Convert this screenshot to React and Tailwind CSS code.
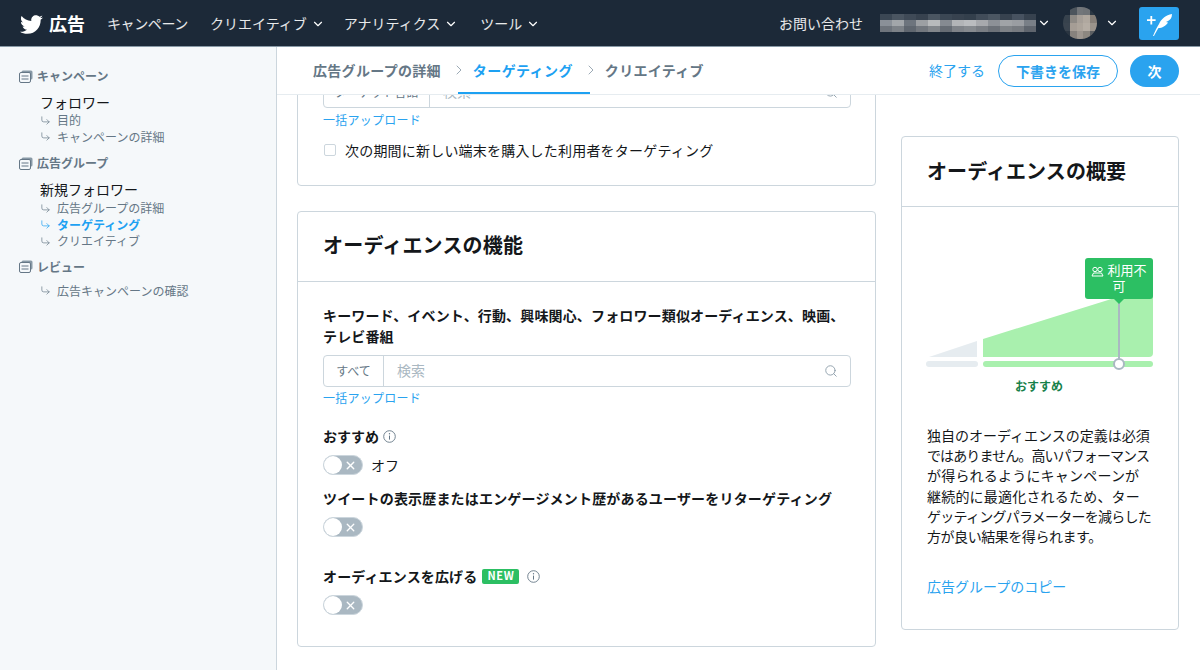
import { FaTwitter } from 'react-icons/fa';
import { ChevronDown, ChevronRight, CornerDownRight, Search, X } from 'lucide-react';

const nameBlocks = [
  ['#3b4754', '#4a5561', '#3f4a57', '#37424f', '#4a5561', '#3b4754', '#37424f', '#333f4c', '#414c59', '#4b5662', '#37424f', '#475260', '#37424f'],
  ['#8a9098', '#a2a6aa', '#6d747d', '#9c9fa3', '#b8babc', '#858a91', '#b2b4b7', '#babcbf', '#a7a9ad', '#8d9197', '#a0a3a7', '#9a9da2', '#797f87'],
  ['#6e747c', '#7d8288', '#5f666f', '#72777e', '#82868b', '#666c74', '#7f8389', '#868a8f', '#7a7e84', '#6c7178', '#7e8287', '#777b81', '#5f656e'],
];

const avatarBlocks = [
  ['#1c2938', '#4d555d', '#72767a', '#6f7377', '#2c3844'],
  ['#37424d', '#8e8a85', '#a69f98', '#b0a89f', '#867f78'],
  ['#3a444f', '#a59d95', '#aca49b', '#b5ada4', '#9a938b'],
  ['#2a3541', '#87827d', '#9d968f', '#8c8780', '#5c5f62'],
];

function Sub({ active, children }) {
  return (
    <div className={`flex items-center h-[16.5px] text-xs ${active ? 'text-[#1da1f2] font-bold' : 'text-[#657786]'}`}>
      <CornerDownRight className="w-[11px] h-[11px] mr-[6px] shrink-0" strokeWidth={1.5} />
      {children}
    </div>
  );
}

function SectionTitle({ children, className = '' }) {
  return (
    <div className={`flex items-center text-xs font-bold text-[#657786] h-4 ${className}`}>
      <svg width="14" height="13" viewBox="0 0 14 13" className="mr-[4px] shrink-0">
        <rect x="2.5" y="0.5" width="11" height="9" rx="1.5" fill="#8899a6" />
        <rect x="0.5" y="2.5" width="11" height="10" rx="1.5" fill="#f5f8fa" stroke="#657786" />
        <path d="M2.5 6h7M2.5 9h7" stroke="#657786" />
      </svg>
      {children}
    </div>
  );
}

function NavItem({ children, arrow = true, className = '' }) {
  return (
    <div className={`flex items-center text-white/90 text-sm ${className}`}>
      {children}
      {arrow && <ChevronDown className="w-[14px] h-[14px] ml-[4px] mt-[2px] text-white" strokeWidth={2} />}
    </div>
  );
}

function Toggle() {
  return (
    <div className="w-10 h-5 rounded-full bg-[#aab8c2] border border-[#ccd6dd] flex items-center justify-between shrink-0">
      <div className="w-[18px] h-[18px] rounded-full bg-white" />
      <X className="w-[13px] h-[13px] text-white mr-[5px]" strokeWidth={2.5} />
    </div>
  );
}

function Info() {
  return (
    <svg width="13" height="13" viewBox="0 0 13 13" className="shrink-0">
      <circle cx="6.5" cy="6.5" r="5.8" fill="none" stroke="#657786" strokeWidth="0.9" />
      <path d="M6.5 5.6v4" stroke="#657786" strokeWidth="1" />
      <circle cx="6.5" cy="3.8" r="0.7" fill="#657786" />
    </svg>
  );
}

function SearchBox({ prefix, prefixWidth = 'w-[60px]' }) {
  return (
    <div className="flex h-8 border border-[#ccd6dd] rounded-[4px] bg-white">
      <div className={`${prefixWidth} shrink-0 whitespace-nowrap border-r border-[#ccd6dd] flex items-center justify-center text-xs text-[#657786] pb-[1px]`}>{prefix}</div>
      <div className="flex-1 flex items-center justify-between pl-[13px] pr-[12px] text-sm text-[#aab8c2]">
        <span className="mb-[2px]">検索</span>
        <Search className="w-[14px] h-[14px] text-[#8899a6]" strokeWidth={1.5} />
      </div>
    </div>
  );
}

function Card({ className = '', children }) {
  return <div className={`bg-white border border-[#ccd6dd] rounded-[4px] ${className}`}>{children}</div>;
}

export default function App() {
  return (
    <div className="w-[1200px] h-[670px] overflow-hidden flex flex-col bg-white text-[#14171a] font-['Noto_Sans_CJK_JP','Liberation_Sans',sans-serif]">
      {/* top bar */}
      <header className="h-[47px] shrink-0 bg-[#1c2938] border-b border-[#8899a6] flex items-center pl-[20px] pr-[21px]">
        <FaTwitter className="text-white w-[23px] h-[23px] mt-[2px]" />
        <span className="text-white font-bold text-lg ml-[6px] mr-[22px] leading-none">広告</span>
        <div className="flex items-center gap-[19px]">
          <NavItem arrow={false} className="tracking-[-0.4px] mr-[3px]">キャンペーン</NavItem>
          <NavItem>クリエイティブ</NavItem>
          <NavItem className="mr-[3px]">アナリティクス</NavItem>
          <NavItem>ツール</NavItem>
        </div>
        <div className="ml-auto flex items-center">
          <span className="text-white/90 text-sm mr-[17px]">お問い合わせ</span>
          <div className="flex flex-col">
            {nameBlocks.map((row, i) => (
              <div key={i} className="flex">
                {row.map((c, j) => (
                  <div key={j} className="w-[12px] h-[6px]" style={{ background: c }} />
                ))}
              </div>
            ))}
          </div>
          <ChevronDown className="w-[14px] h-[14px] text-white ml-[1px]" strokeWidth={2} />
          <div className="ml-[12px] w-[34px] h-[32px] rounded-full overflow-hidden flex flex-col">
            {avatarBlocks.map((row, i) => (
              <div key={i} className="flex flex-1">
                {row.map((c, j) => (
                  <div key={j} className="flex-1" style={{ background: c }} />
                ))}
              </div>
            ))}
          </div>
          <ChevronDown className="w-[14px] h-[14px] text-white ml-[8px]" strokeWidth={2} />
          <div className="ml-[20px] w-[40px] h-[33px] bg-[#2aa3ef] rounded-[3px]">
            <svg width="40" height="33" viewBox="0 0 40 33" className="block">
              <path d="M12.3 9v8.4M8 13.2h8.6" stroke="#fff" strokeWidth="1.8" />
              <path d="M14 29C16 24 18 20 20 17C22 12 27 8 33 7C33 11 31 13 29 14L27 15L29 15.5C27 19 23 21 19.5 21C17.5 24 16 27 15 29Z" fill="#fff" />
            </svg>
          </div>
        </div>
      </header>

      <div className="flex flex-1 min-h-0">
        {/* sidebar */}
        <aside className="w-[277px] shrink-0 bg-[#f5f8fa] border-r border-[#ccd6dd] pl-[19px] pt-[21px]">
          <SectionTitle>キャンペーン</SectionTitle>
          <div className="pl-[21px] mt-[9px]">
            <div className="text-sm leading-[19px]">フォロワー</div>
            <Sub>目的</Sub>
            <Sub>キャンペーンの詳細</Sub>
          </div>
          <SectionTitle className="mt-[10px]">広告グループ</SectionTitle>
          <div className="pl-[21px] mt-[8px]">
            <div className="text-sm leading-[21px]">新規フォロワー</div>
            <Sub>広告グループの詳細</Sub>
            <Sub active>ターゲティング</Sub>
            <Sub>クリエイティブ</Sub>
          </div>
          <SectionTitle className="mt-[9px]">レビュー</SectionTitle>
          <div className="pl-[21px] mt-[8px]">
            <Sub>広告キャンペーンの確認</Sub>
          </div>
        </aside>

        <main className="flex-1 min-w-0 flex flex-col">
          {/* step tabs */}
          <div className="h-[48px] shrink-0 bg-white border-b border-[#e6ecf0] flex items-center pl-[36px] pr-[21px] relative z-10">
            <span className="text-sm leading-5 mb-[2px] font-bold text-[#657786] tracking-[0.3px]">広告グループの詳細</span>
            <ChevronRight className="w-[16px] h-[16px] text-[#8899a6] ml-[10px] mr-[6px] mb-[2px]" strokeWidth={1.25} />
            <span className="relative text-sm leading-5 mb-[2px] font-bold text-[#1da1f2] tracking-[0.4px]">
              ターゲティング
              <span className="absolute left-[-15px] right-[-17px] top-[32px] h-[2px] bg-[#1da1f2]" />
            </span>
            <ChevronRight className="w-[16px] h-[16px] text-[#8899a6] ml-[10px] mr-[6px] mb-[2px]" strokeWidth={1.25} />
            <span className="text-sm leading-5 mb-[2px] font-bold text-[#657786] tracking-[0.3px]">クリエイティブ</span>
            <span className="ml-auto text-sm text-[#2aa3ef] mb-[2px]">終了する</span>
            <button className="ml-[13px] w-[120px] h-8 rounded-full border border-[#2aa3ef] text-sm font-bold text-[#2aa3ef]">下書きを保存</button>
            <button className="ml-[12px] w-[49px] h-8 rounded-full bg-[#2aa3ef] text-sm font-bold text-white">次</button>
          </div>

          {/* scrolled content */}
          <div className="flex-1 min-h-0 overflow-hidden flex pl-[20px] pr-[21px] gap-[25px]">
            <div className="w-[579px] shrink-0">
              <Card className="-mt-[20px] pt-0 pb-[25px] pl-[25px] pr-[24px]">
                <SearchBox prefix="ターゲット言語" prefixWidth="w-[106px]" />
                <div className="text-xs text-[#2aa3ef] tracking-[0.25px] mt-[4px] leading-[16px]">一括アップロード</div>
                <div className="flex items-center mt-[12px] h-5">
                  <div className="w-[12px] h-[12px] ml-[1px] border border-[#ccd6dd] rounded-[2px]" />
                  <span className="ml-[9px] text-sm tracking-[0.2px]">次の期間に新しい端末を購入した利用者をターゲティング</span>
                </div>
              </Card>
              <Card className="mt-[25px] h-[436px]">
                <div className="h-[70px] border-b border-[#ccd6dd] flex items-center pl-[25px] pb-[3px] text-xl font-bold tracking-[0.2px]">オーディエンスの機能</div>
                <div className="pl-[25px] pr-[24px] pt-[23px]">
                  <div className="text-sm font-bold leading-[21px] tracking-[0.15px] whitespace-nowrap">
                    キーワード、イベント、行動、興味関心、フォロワー類似オーディエンス、映画、<br />テレビ番組
                  </div>
                  <div className="mt-[8px]"><SearchBox prefix="すべて" /></div>
                  <div className="text-xs text-[#2aa3ef] tracking-[0.25px] mt-[3px] leading-[16px]">一括アップロード</div>
                  <div className="flex items-center gap-[4px] mt-[20px] h-5 text-sm font-bold">おすすめ <Info /></div>
                  <div className="flex items-center mt-[9px]">
                    <Toggle />
                    <span className="ml-[8px] text-sm">オフ</span>
                  </div>
                  <div className="mt-[13px] h-5 flex items-center text-sm font-bold tracking-[0.18px] whitespace-nowrap">ツイートの表示歴またはエンゲージメント歴があるユーザーをリターゲティング</div>
                  <div className="mt-[9px]"><Toggle /></div>
                  <div className="flex items-center mt-[29px] h-5 text-sm font-bold tracking-[0.15px]">
                    オーディエンスを広げる
                    <span className="ml-[5px] w-[37px] h-[15px] rounded-[2px] bg-[#2cbf63] text-white text-[11px] font-bold tracking-[0.6px] flex items-center justify-center">NEW</span>
                    <span className="ml-[8px]"><Info /></span>
                  </div>
                  <div className="mt-[9px]"><Toggle /></div>
                </div>
              </Card>
            </div>

            {/* audience summary */}
            <div className="w-[278px] shrink-0 pt-[41px]">
              <Card className="h-[494px]">
                <div className="h-[70px] border-b border-[#ccd6dd] flex items-center px-[25px] pb-[2px] text-xl font-bold tracking-[0.1px]">オーディエンスの概要</div>
                <div className="relative h-[208px]">
                  <svg width="276" height="190" viewBox="0 0 276 190" className="block">
                    <path d="M27 150 L75 134 V150 Z" fill="#e6ecf0" />
                    <path d="M81 132 L251 79 V146 a4 4 0 0 1 -4 4 H81 Z" fill="#a9f0ae" />
                    <rect x="24" y="154" width="52" height="6" rx="3" fill="#e6ecf0" />
                    <rect x="81" y="154" width="170" height="6" rx="3" fill="#a9f0ae" />
                    <path d="M217 90 V157" stroke="#aab8c2" strokeWidth="2" />
                    <circle cx="217" cy="157" r="5" fill="#fff" stroke="#aab8c2" strokeWidth="2" />
                  </svg>
                  <div className="absolute left-[183px] top-[51px] w-[68px] h-[41px] rounded-[3px] bg-[#2cbf63] text-white text-[13px] leading-[16px] text-center pt-[4px] px-[6px]">
                    <svg width="13" height="11" viewBox="0 0 13 11" className="inline mr-[3px]">
                      <circle cx="4" cy="3.5" r="2.2" fill="none" stroke="#fff" />
                      <circle cx="9" cy="3.5" r="2.2" fill="none" stroke="#fff" />
                      <path d="M1 10l1.5-3h8L12 10Z" fill="none" stroke="#fff" />
                    </svg>
                    利用不可
                    <div className="absolute left-[29px] top-[41px] w-0 h-0 border-x-[5px] border-x-transparent border-t-[5px] border-t-[#2cbf63]" />
                  </div>
                  <div className="absolute left-[113px] top-[171px] text-xs font-bold text-[#17814a]">おすすめ</div>
                </div>
                <div className="px-[25px] text-sm leading-[20.2px] mt-[10px] whitespace-nowrap">
                  <div>独自のオーディエンスの定義は必須</div>
                  <div className="tracking-[-0.9px]">ではありません。高いパフォーマンス</div>
                  <div className="tracking-[0.2px]">が得られるようにキャンペーンが</div>
                  <div className="tracking-[0.2px]">継続的に最適化されるため、ター</div>
                  <div className="tracking-[-0.75px]">ゲッティングパラメーターを減らした</div>
                  <div className="tracking-[-0.45px]">方が良い結果を得られます。</div>
                </div>
                <div className="px-[25px] mt-[30px] text-sm text-[#2aa3ef]">広告グループのコピー</div>
              </Card>
            </div>
          </div>
        </main>
      </div>
    </div>
  );
}
